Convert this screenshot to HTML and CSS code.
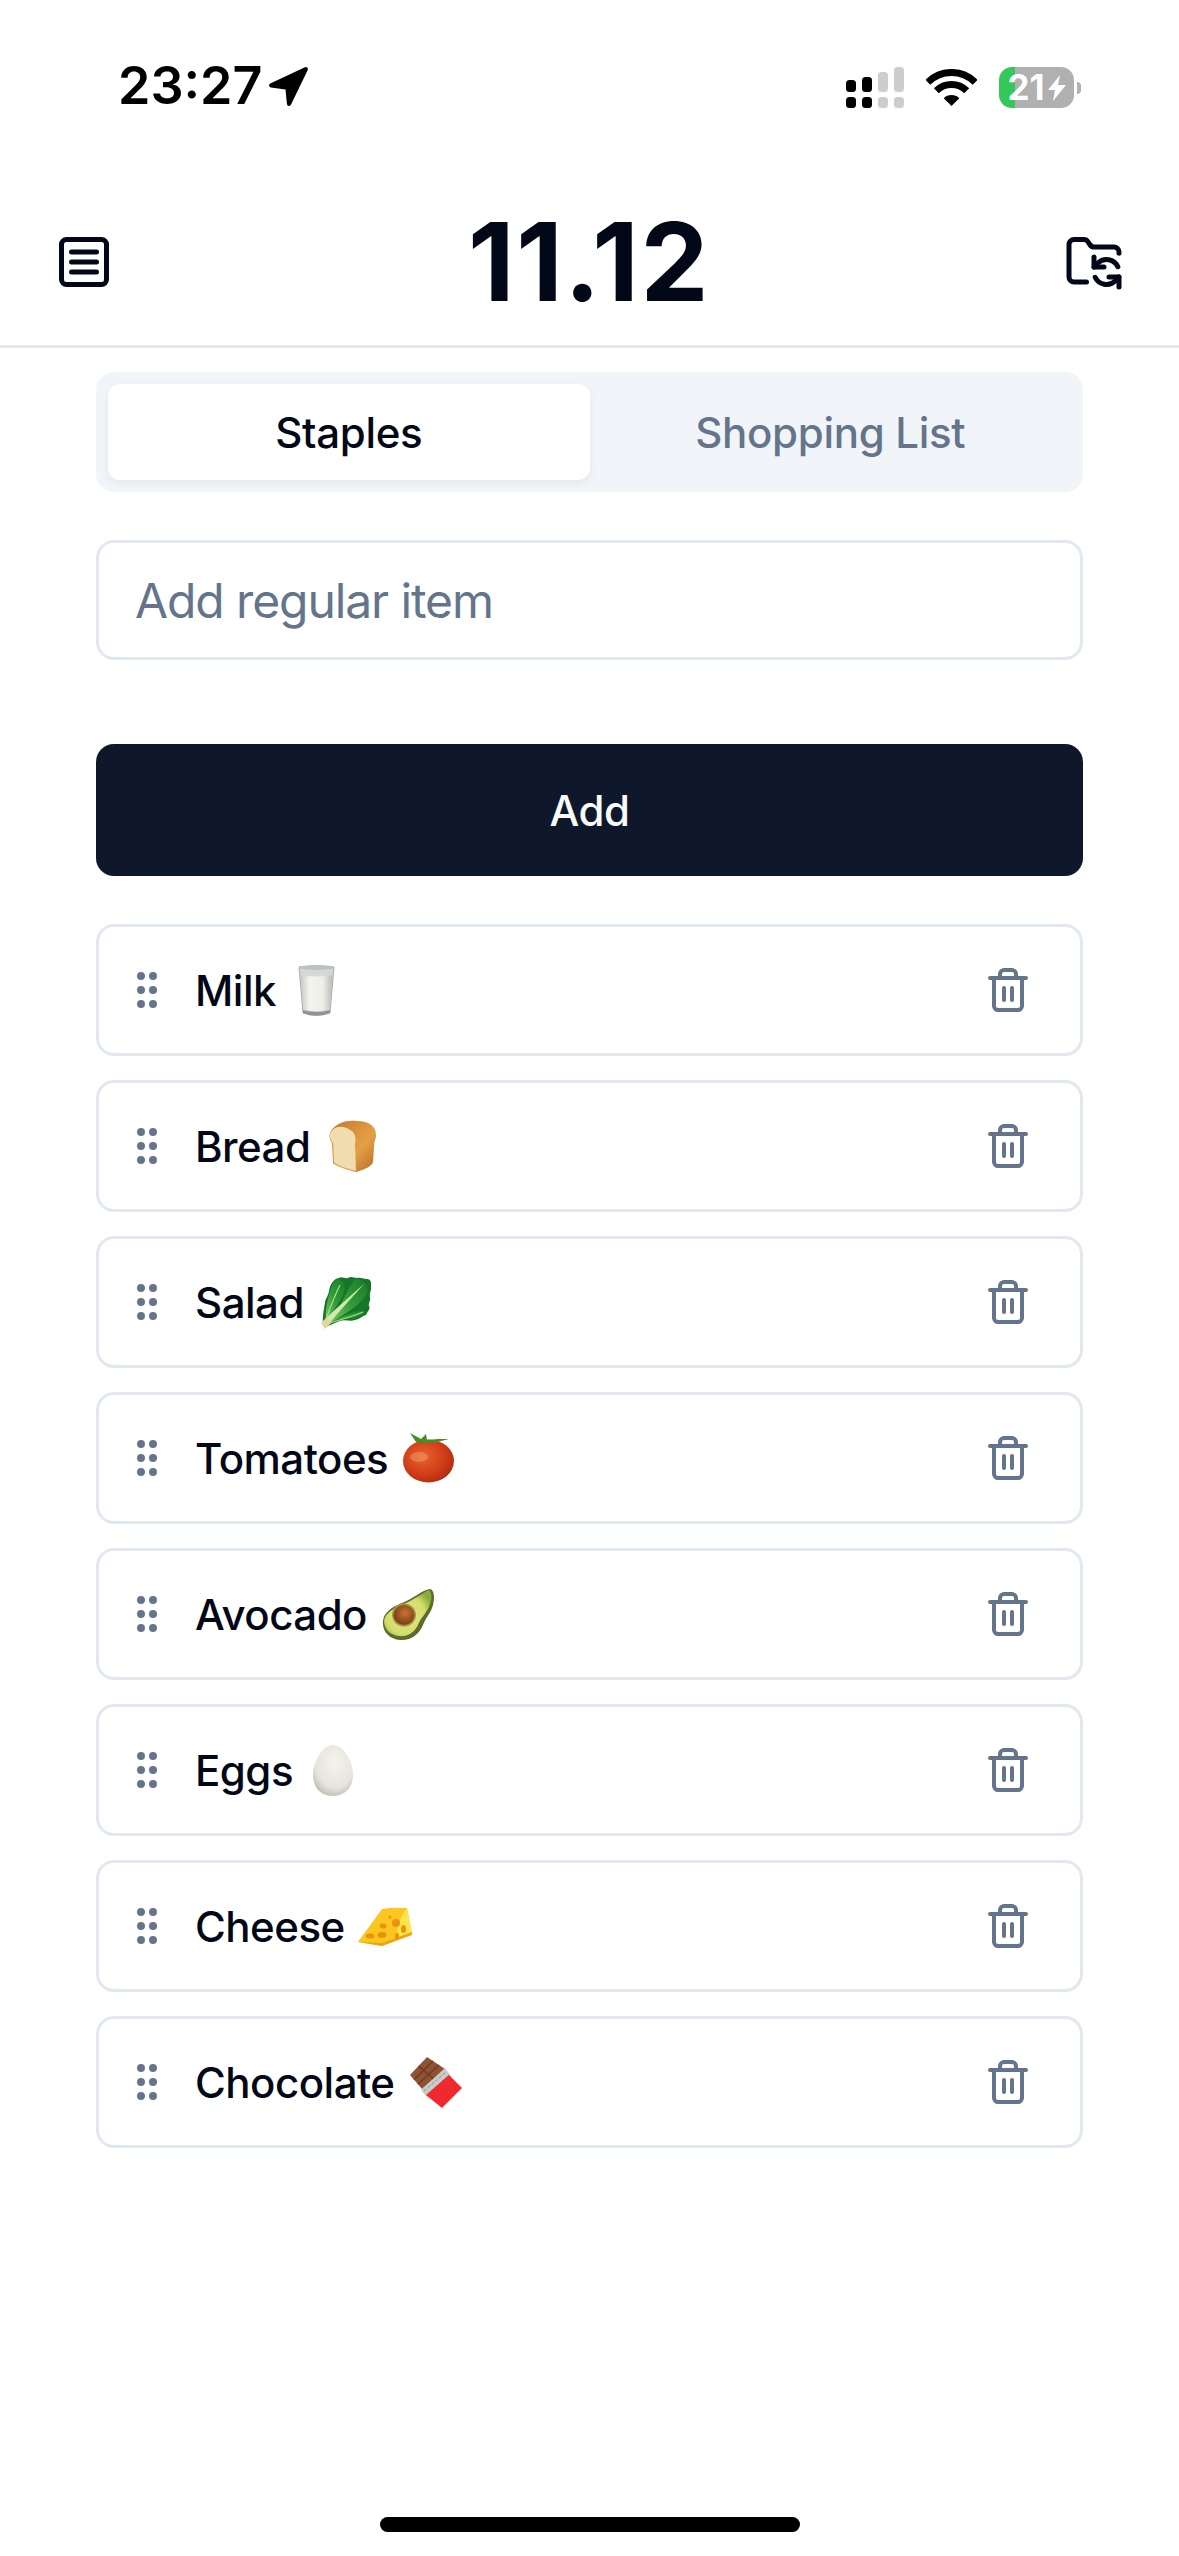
FILE: index.html
```html
<!DOCTYPE html>
<html lang="en">
<head>
  <meta charset="UTF-8">
  <meta name="viewport" content="width=device-width, initial-scale=1">
  <title>11.12</title>
  <link rel="stylesheet" href="styles.css">
</head>
<body>

<svg class="sprite" xmlns="http://www.w3.org/2000/svg">
  <symbol id="grip" viewBox="0 0 24 24">
    <circle cx="9" cy="12" r="1"/><circle cx="9" cy="5" r="1"/><circle cx="9" cy="19" r="1"/>
    <circle cx="15" cy="12" r="1"/><circle cx="15" cy="5" r="1"/><circle cx="15" cy="19" r="1"/>
  </symbol>
  <symbol id="trash" viewBox="0 0 24 24">
    <path d="M3 6h18"/>
    <path d="M19 6v14c0 1-1 2-2 2H7c-1 0-2-1-2-2V6"/>
    <path d="M8 6V4c0-1 1-2 2-2h4c1 0 2 1 2 2v2"/>
    <path d="M10 11v6"/><path d="M14 11v6"/>
  </symbol>
</svg>

<!-- status bar -->
<div class="status-bar">
  <div class="status-left">
    <span class="time">23:27</span>
    <svg class="location" viewBox="0 0 39 39"><path d="M36 3 3 18.5l15.5 2L20 36z"/></svg>
  </div>
  <div class="status-right">
    <svg class="signal" viewBox="0 0 58 41">
      <g fill="#000">
        <rect x="0" y="13" width="10" height="12" rx="3.5"/><rect x="0" y="30" width="10" height="11" rx="3.5"/>
        <rect x="16" y="10" width="10" height="15" rx="3.5"/><rect x="16" y="30" width="10" height="11" rx="3.5"/>
      </g>
      <g fill="#cdcdcd">
        <rect x="32" y="5" width="10" height="20" rx="3.5"/><rect x="32" y="30" width="10" height="11" rx="3.5"/>
        <rect x="48" y="0" width="10" height="25" rx="3.5"/><rect x="48" y="30" width="10" height="11" rx="3.5"/>
      </g>
    </svg>
    <svg class="wifi" viewBox="0 0 51 37">
      <path d="M1.8 13.3a33.5 33.5 0 0 1 47.4 0" fill="none" stroke="#000" stroke-width="7"/>
      <path d="M10.3 21.8a21.5 21.5 0 0 1 30.4 0" fill="none" stroke="#000" stroke-width="7"/>
      <path d="M25.5 37l-7.8-7.8a11 11 0 0 1 15.6 0z"/>
    </svg>
    <div class="battery-wrap">
      <div class="battery">
        <span>21</span>
        <svg class="bolt" viewBox="0 0 18 26"><path d="M12 0 0 15h7L5 26 18 10h-8z"/></svg>
      </div>
      <div class="battery-cap"></div>
    </div>
  </div>
</div>

<!-- header -->
<header class="app-header">
  <svg class="header-icon" viewBox="0 0 24 24">
    <rect x="3" y="3" width="18" height="18" rx="2"/>
    <path d="M7 8h10"/><path d="M7 12h10"/><path d="M7 16h10"/>
  </svg>
  <h1>11.12</h1>
  <svg class="header-icon" viewBox="0 0 24 24">
    <path d="M9 20H4a2 2 0 0 1-2-2V5a2 2 0 0 1 2-2h3.9a2 2 0 0 1 1.69.9l.81 1.2a2 2 0 0 0 1.67.9H20a2 2 0 0 1 2 2v.5"/>
    <path d="M12 10v4h4"/>
    <path d="m12 14 1.535-1.605a5 5 0 0 1 8 1.5"/>
    <path d="M22 22v-4h-4"/>
    <path d="m22 18-1.535 1.605a5 5 0 0 1-8-1.5"/>
  </svg>
</header>

<main class="content">
  <div class="tabs">
    <div class="tab active">Staples</div>
    <div class="tab">Shopping List</div>
  </div>

  <input class="add-input" type="text" placeholder="Add regular item">
  <button class="add-btn">Add</button>

  <ul class="items">
    <li class="item">
      <svg class="grip"><use href="#grip"/></svg>
      <div class="item-name">Milk
        <svg class="emoji" viewBox="0 0 54 54">
          <defs><linearGradient id="milk"><stop offset="0" stop-color="#c6c7c1"/><stop offset=".28" stop-color="#f5f5ef"/><stop offset=".7" stop-color="#eeeee8"/><stop offset="1" stop-color="#b9bab4"/></linearGradient></defs>
          <path d="M10 4Q27 1 45 4L41 50Q27 55 14 50Z" fill="#d4d8d6" stroke="#a9adab" stroke-width="1"/>
          <path d="M11.5 12Q27 15 43.5 12L40.5 46Q27 50 14.5 46Z" fill="url(#milk)"/>
          <ellipse cx="27.5" cy="4.5" rx="17.5" ry="2.5" fill="#bcc2c1"/>
          <path d="M14 47Q27 51 41 47L41 50Q27 55 14 50Z" fill="#92958f"/>
        </svg>
      </div>
      <svg class="trash"><use href="#trash"/></svg>
    </li>
    <li class="item">
      <svg class="grip"><use href="#grip"/></svg>
      <div class="item-name">Bread
        <svg class="emoji" viewBox="0 0 54 54">
          <defs><linearGradient id="crust" x1="0" y1="0" x2="1" y2="1"><stop offset="0" stop-color="#c9762c"/><stop offset=".6" stop-color="#e3a047"/><stop offset="1" stop-color="#b56a22"/></linearGradient></defs>
          <path d="M8 12C14 3 24 1 34 2C44 2 53 6 53 16C53 20 51 22 51 28L50 43C50 47 38 52 33 53C28 52 12 47 10 44L9 24C6 20 6 15 8 12Z" fill="url(#crust)"/>
          <path d="M8 13C12 6 22 6 30 13C33 17 33 21 32 25L33 52C26 50 14 47 11 43L10 24C7 21 6 16 8 13Z" fill="#f0dcae"/>
        </svg>
      </div>
      <svg class="trash"><use href="#trash"/></svg>
    </li>
    <li class="item">
      <svg class="grip"><use href="#grip"/></svg>
      <div class="item-name">Salad
        <svg class="emoji" viewBox="0 0 54 54">
          <defs>
            <linearGradient id="leaf" x1="0" y1="1" x2="1" y2="0"><stop offset="0" stop-color="#7cc765"/><stop offset=".5" stop-color="#2f9b37"/><stop offset="1" stop-color="#1b7a2b"/></linearGradient>
          </defs>
          <path d="M6 50C5 42 7 34 8 28C8 24 11 22 12 16C13 10 16 4 22 3C25 1 28 4 31 3C34 1 37 3 40 3C44 2 47 4 50 4C53 4 55 7 54 11C55 15 52 18 53 22C54 26 51 28 52 31C54 34 50 37 49 40C45 41 43 44 38 45C33 47 28 44 23 46C18 48 13 50 9 52Z" fill="#17752a"/>
          <path d="M21 4C28 5 30 14 25 22C21 30 14 38 9 47C8 36 10 28 12 20C14 12 16 6 21 4Z" fill="url(#leaf)"/>
          <path d="M38 4C46 4 52 8 50 18C46 28 30 38 13 48C22 36 30 14 38 4Z" fill="url(#leaf)"/>
          <path d="M14 48C24 42 38 34 50 36C44 41 36 44 28 43C22 44 18 46 14 48Z" fill="url(#leaf)"/>
          <path d="M5 47C14 38 30 24 47 9C34 24 20 38 10 52Z" fill="#d2e8ac"/>
          <path d="M8 47C12 36 16 24 23 10" fill="none" stroke="#a9dc92" stroke-width="1.2"/>
          <path d="M9 49C20 46 34 42 46 37" fill="none" stroke="#a9dc92" stroke-width="1.2"/>
          <path d="M4 48L10 43L14 48L8 54Z" fill="#dcd8a0"/>
        </svg>
      </div>
      <svg class="trash"><use href="#trash"/></svg>
    </li>
    <li class="item">
      <svg class="grip"><use href="#grip"/></svg>
      <div class="item-name">Tomatoes
        <svg class="emoji" viewBox="0 0 54 54">
          <defs><radialGradient id="tomato" cx=".4" cy=".4" r=".7"><stop offset="0" stop-color="#e8642c"/><stop offset=".6" stop-color="#d03c17"/><stop offset="1" stop-color="#a82a10"/></radialGradient></defs>
          <ellipse cx="27.5" cy="30" rx="25.5" ry="21.5" fill="url(#tomato)"/>
          <ellipse cx="18" cy="26" rx="9" ry="5" fill="#f6a57c" opacity=".45"/>
          <path d="M9 2L20 8L25 3L26 9L37 8L48 8L36 11L26 12L15 11Z" fill="#3f8f2b"/>
        </svg>
      </div>
      <svg class="trash"><use href="#trash"/></svg>
    </li>
    <li class="item">
      <svg class="grip"><use href="#grip"/></svg>
      <div class="item-name">Avocado
        <svg class="emoji" viewBox="0 0 54 54">
          <defs>
            <radialGradient id="flesh" cx=".45" cy=".55" r=".6"><stop offset="0" stop-color="#e6e88a"/><stop offset=".7" stop-color="#d3dd6c"/><stop offset="1" stop-color="#86ad39"/></radialGradient>
            <radialGradient id="pit" cx=".55" cy=".4" r=".6"><stop offset="0" stop-color="#c97431"/><stop offset="1" stop-color="#7a3d15"/></radialGradient>
          </defs>
          <path d="M50 2C54 3 55 10 53 18C51 26 46 30 43 38C39 48 30 54 20 53C9 52 2 44 3 34C4 25 12 20 22 16C33 12 42 3 50 2Z" fill="#5d6b2c"/>
          <path d="M49 3C52 6 52 12 50 17C47 26 41 30 38 38C34 46 27 50 19 49C10 48 4 42 4 34C5 26 14 21 24 17C34 13 42 6 49 3Z" fill="url(#flesh)"/>
          <ellipse cx="24" cy="28" rx="12" ry="11.5" fill="#9d9a40"/>
          <ellipse cx="24" cy="28" rx="10.5" ry="10" fill="url(#pit)"/>
        </svg>
      </div>
      <svg class="trash"><use href="#trash"/></svg>
    </li>
    <li class="item">
      <svg class="grip"><use href="#grip"/></svg>
      <div class="item-name">Eggs
        <svg class="emoji" viewBox="0 0 54 54">
          <defs><radialGradient id="egg" cx=".55" cy=".35" r=".75"><stop offset="0" stop-color="#f4f3ed"/><stop offset=".65" stop-color="#e6e4dc"/><stop offset="1" stop-color="#b4b0a4"/></radialGradient></defs>
          <path d="M27 2C38 2 47 19 47 32C47 45 38 53 27 53C15 53 7 45 7 32C7 19 16 2 27 2Z" fill="url(#egg)"/>
        </svg>
      </div>
      <svg class="trash"><use href="#trash"/></svg>
    </li>
    <li class="item">
      <svg class="grip"><use href="#grip"/></svg>
      <div class="item-name">Cheese
        <svg class="emoji" viewBox="0 0 54 54">
          <path d="M0 43L24 10Q36 8 49 9L54 35L24 47Z" fill="#fbc61f"/>
          <path d="M49 9L54 35L39 41Q38 22 49 9Z" fill="#fde44b"/>
          <path d="M0 43L24 44L54 33L54 36L24 47Z" fill="#eaa514"/>
          <g fill="#e8920f">
            <ellipse cx="12" cy="37" rx="4.5" ry="2.5"/><ellipse cx="24" cy="36" rx="4.5" ry="3"/>
            <ellipse cx="25" cy="27" rx="3.5" ry="2.5"/><ellipse cx="38" cy="24" rx="4" ry="4"/>
            <ellipse cx="45.5" cy="30" rx="2.5" ry="4"/><circle cx="32" cy="18" r="1.5"/>
            <ellipse cx="39" cy="37" rx="2" ry="3"/>
          </g>
        </svg>
      </div>
      <svg class="trash"><use href="#trash"/></svg>
    </li>
    <li class="item">
      <svg class="grip"><use href="#grip"/></svg>
      <div class="item-name">Chocolate
        <svg class="emoji" viewBox="0 0 54 54">
          <path d="M19 2L2 20L14 34L37 14Z" fill="#8f5234"/>
          <path d="M10.5 11L25.5 24M25 6L6 24.7M31 10L10 29.3" fill="none" stroke="#6d3a22" stroke-width="1.5"/>
          <path d="M13 35L37 13L43 21L19 42Z" fill="#c9cbcb"/>
          <path d="M16 36L38 17M19 40L41 20" fill="none" stroke="#8e9192" stroke-width="1" stroke-dasharray="3 2"/>
          <path d="M18 40L41 20L54 33L34 53Z" fill="#ee2a2e"/>
        </svg>
      </div>
      <svg class="trash"><use href="#trash"/></svg>
    </li>
  </ul>
</main>

<div class="home-bar"><div class="home-indicator"></div></div>

</body>
</html>
```

FILE: styles.css
```css
* {
  box-sizing: border-box;
}
body {
  margin: 0;
  width: 1179px;
  height: 2556px;
  display: flex;
  flex-direction: column;
  background: #ffffff;
  color: #020817;
  font-family: Inter, 'Noto Sans', sans-serif;
  overflow: hidden;
}
.sprite {
  display: none;
}

/* status bar */
.status-bar {
  height: 174px;
  padding: 60px 98px 0 118px;
  display: flex;
  justify-content: space-between;
  align-items: flex-start;
  color: #000;
}
.status-left {
  display: flex;
  align-items: center;
  gap: 6px;
}
.time {
  font-size: 52px;
  line-height: 52px;
  font-weight: 600;
}
.location {
  width: 41px;
  height: 41px;
  stroke: #000;
  stroke-width: 4;
  stroke-linejoin: round;
}
.status-right {
  display: flex;
  align-items: flex-start;
  gap: 22px;
  padding-top: 7px;
}
.signal {
  width: 58px;
  height: 41px;
}
.wifi {
  width: 51px;
  height: 37px;
  margin-top: 2px;
}
.battery-wrap {
  display: flex;
  align-items: center;
  gap: 3px;
}
.battery {
  width: 75px;
  height: 41px;
  border-radius: 13px;
  background: linear-gradient(90deg, #34c759 16px, #b0b0b0 16px);
  display: flex;
  align-items: center;
  justify-content: center;
  gap: 3px;
  color: #fff;
  font-size: 35px;
  font-weight: 700;
  line-height: 41px;
}
.bolt {
  width: 18px;
  height: 26px;
  fill: #fff;
}
.battery-cap {
  width: 4px;
  height: 12px;
  border-radius: 0 4px 4px 0;
  background: #b0b0b0;
}

/* header */
.app-header {
  height: 174px;
  padding: 5px 55px 0 54px;
  display: flex;
  justify-content: space-between;
  align-items: center;
  border-bottom: 3px solid #e2e8f0;
}
.app-header h1 {
  margin: 0;
  font-size: 108px;
  line-height: 120px;
  font-weight: 700;
  letter-spacing: 1.6px;
}
.header-icon {
  width: 60px;
  height: 60px;
  fill: none;
  stroke: #020817;
  stroke-width: 2;
  stroke-linecap: round;
  stroke-linejoin: round;
}

/* main */
.content {
  flex: 1;
  padding: 24px 96px 0;
}
.tabs {
  height: 120px;
  padding: 12px;
  display: grid;
  grid-template-columns: 1fr 1fr;
  background: #f1f5f9;
  border-radius: 18px;
}
.tab {
  display: flex;
  align-items: center;
  justify-content: center;
  font-size: 42px;
  font-weight: 500;
  letter-spacing: -0.3px;
  color: #64748b;
  border-radius: 12px;
}
.tab.active {
  background: #ffffff;
  color: #020817;
  box-shadow: 0 3px 9px rgba(0, 0, 0, 0.06);
}
.add-input {
  display: block;
  width: 100%;
  height: 120px;
  margin-top: 48px;
  padding: 0 36px;
  border: 3px solid #e2e8f0;
  border-radius: 18px;
  background: #ffffff;
  font-family: inherit;
  font-size: 48px;
  letter-spacing: -1.1px;
  color: #020817;
}
.add-input::placeholder {
  color: #64748b;
  opacity: 1;
}
.add-btn {
  display: block;
  width: 100%;
  height: 132px;
  margin-top: 84px;
  border: none;
  border-radius: 18px;
  background: #0f172a;
  color: #f8fafc;
  font-family: inherit;
  font-size: 42px;
  font-weight: 500;
  letter-spacing: -0.5px;
}
.items {
  list-style: none;
  margin: 48px 0 0;
  padding: 0;
  display: flex;
  flex-direction: column;
  gap: 24px;
}
.item {
  height: 132px;
  padding: 0 48px 0 24px;
  display: flex;
  align-items: center;
  gap: 24px;
  border: 3px solid #e2e8f0;
  border-radius: 18px;
}
.grip {
  width: 48px;
  height: 48px;
  flex: none;
  fill: #64748b;
  stroke: #64748b;
  stroke-width: 2;
}
.item-name {
  flex: 1;
  display: flex;
  align-items: center;
  gap: 13px;
  font-size: 42px;
  font-weight: 500;
  letter-spacing: -0.5px;
}
.emoji {
  width: 54px;
  height: 54px;
  flex: none;
}
.trash {
  width: 48px;
  height: 48px;
  flex: none;
  fill: none;
  stroke: #64748b;
  stroke-width: 2;
  stroke-linecap: round;
  stroke-linejoin: round;
}

/* home indicator */
.home-bar {
  padding-bottom: 24px;
  display: flex;
  justify-content: center;
}
.home-indicator {
  width: 420px;
  height: 15px;
  border-radius: 8px;
  background: #000;
}
```
